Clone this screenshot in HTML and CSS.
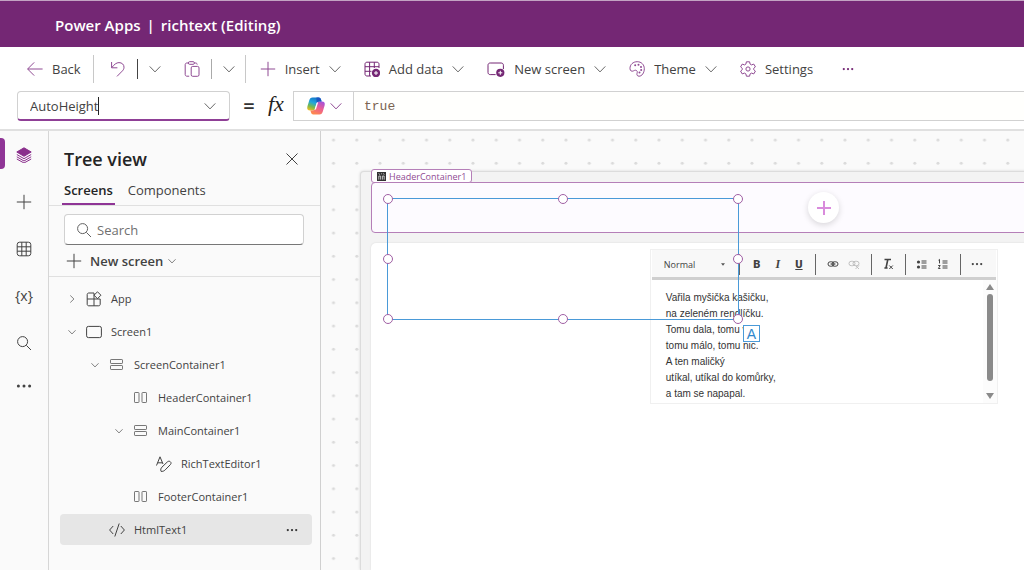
FILE: index.html
```html
<!DOCTYPE html>
<html lang="en">
<head>
    <meta charset="UTF-8">
    <meta name="viewport" content="width=device-width, initial-scale=1.0">
    <title>Power Apps | richtext (Editing)</title>
    <link rel="stylesheet" href="styles.css">
</head>
<body>
    <!-- Shared icons -->
    <svg class="sprite" aria-hidden="true">
        <symbol id="chevron" viewBox="0 0 12 12"><path d="M.7 3.4 6 8.9l5.3-5.5"/></symbol>
        <symbol id="plus" viewBox="0 0 16 16"><path d="M8 .8v14.4M.8 8h14.4"/></symbol>
        <symbol id="search" viewBox="0 0 16 16"><circle cx="6.6" cy="6.6" r="5"/><path d="m10.4 10.4 4.6 4.6"/></symbol>
        <symbol id="dots" viewBox="0 0 16 16"><g fill="currentColor" stroke="none"><circle cx="2.4" cy="8" r="1.5"/><circle cx="8" cy="8" r="1.5"/><circle cx="13.6" cy="8" r="1.5"/></g></symbol>
        <symbol id="rows" viewBox="0 0 16 16"><rect x="1.500" y="2.500" width="12" height="4" rx=".6"/><rect x="1.500" y="8.500" width="12" height="4" rx=".6"/></symbol>
        <symbol id="columns" viewBox="0 0 16 16"><rect x="1.500" y="2.500" width="4.500" height="10" rx=".6"/><rect x="9" y="2.500" width="4.500" height="10" rx=".6"/></symbol>
        <symbol id="grid" viewBox="0 0 16 16"><rect x="1.2" y="1.2" width="13.6" height="13.6" rx="2.4"/><path d="M5.8 1.2v13.6M10.2 1.2v13.6M1.2 5.8h13.6M1.2 10.2h13.6"/></symbol>
    </svg>

    <header class="topbar">
        <button class="waffle" aria-label="App launcher">
            <svg viewBox="0 0 16 16" width="16" height="16" fill="currentColor">
                <circle cx="2" cy="2" r="1.6"/><circle cx="8" cy="2" r="1.6"/><circle cx="14" cy="2" r="1.6"/>
                <circle cx="2" cy="8" r="1.6"/><circle cx="8" cy="8" r="1.6"/><circle cx="14" cy="8" r="1.6"/>
                <circle cx="2" cy="14" r="1.6"/><circle cx="8" cy="14" r="1.6"/><circle cx="14" cy="14" r="1.6"/>
            </svg>
        </button>
        <h1><span>Power Apps</span><span>|</span><span>richtext (Editing)</span></h1>
    </header>

    <nav class="toolbar">
        <button class="tool">
            <svg class="icon accent" viewBox="0 0 16 16"><path d="M15.6 8H.8M7.2 1.4.6 8l6.6 6.6"/></svg>
            Back
        </button>
        <span class="divider"></span>
        <div class="split">
            <button aria-label="Undo"><svg class="icon accent" viewBox="0 0 16 16"><path d="M1.6 1v5.8h5.8M1.8 6.6C4 3.6 6.4 1.6 9 1.6c3 0 5 2 5 4.6 0 1.600-.6 2.700-1.800 3.900L7 15.400"/></svg></button>
            <span class="divider short dark"></span>
            <button aria-label="Undo options"><svg class="chev"><use href="#chevron"/></svg></button>
        </div>
        <div class="split">
            <button aria-label="Paste"><svg class="icon accent" viewBox="0 0 16 16"><path d="M4.500 2H2.800C1.900 2 1.200 2.700 1.200 3.600v10c0 .9.7 1.600 1.600 1.600h2.400M10.500 2h1.200c.9 0 1.500.7 1.500 1.600"/><rect x="4.400" y=".7" width="6" height="2.600" rx="1.200"/><rect x="7.200" y="5.400" width="7.800" height="9.900" rx="1.500"/></svg></button>
            <span class="divider short"></span>
            <button aria-label="Paste options"><svg class="chev"><use href="#chevron"/></svg></button>
        </div>
        <span class="divider"></span>
        <button class="tool insert">
            <svg class="icon accent"><use href="#plus"/></svg>
            Insert
            <svg class="chev"><use href="#chevron"/></svg>
        </button>
        <button class="tool">
            <svg class="icon accent dark" viewBox="0 0 16 16"><path d="M15 7V3.200C15 2 14.200 1.200 13 1.200H3C1.800 1.200 1 2 1 3.200V13c0 1.200.8 2 2 2h4M5.600 1.200V15M10.300 1.200V7M1 5.700h14M1 10.300h6.500"/><circle cx="12" cy="12" r="4.200" fill="currentColor" stroke="none"/><path d="M12 10v4M10 12h4" stroke="#fff"/></svg>
            Add data
            <svg class="chev"><use href="#chevron"/></svg>
        </button>
        <button class="tool">
            <svg class="icon wide accent dark" viewBox="0 0 18 16"><path d="M16.400 8V4.200c0-1.300-.9-2.200-2.200-2.200H3.200C1.900 2 1 2.900 1 4.200v7.200c0 1.300.9 2.200 2.200 2.200H8.600"/><circle cx="13.300" cy="11.800" r="4.100" fill="currentColor" stroke="none"/><path d="M13.300 9.800v4M11.300 11.800h4" stroke="#fff"/></svg>
            New screen
            <svg class="chev"><use href="#chevron"/></svg>
        </button>
        <button class="tool">
            <svg class="icon accent" viewBox="0 0 16 16"><path d="M1 7.700C.8 3.500 4.200.7 8.200.7c4.200 0 7.100 3 7.100 7 0 4.100-2.400 7.500-5.200 7.500-1.700 0-2.500-1.200-2.100-2.700.5-1.600.4-2.300-.4-2.900-.9-.7-1.800-.4-2.900.2C2.600 10.900 1.100 9.800 1 7.700Z"/><g fill="currentColor" stroke="none"><circle cx="6.200" cy="4.300" r="1"/><circle cx="9.500" cy="3.700" r="1"/><circle cx="12" cy="6" r="1"/><circle cx="12.200" cy="9" r="1"/><circle cx="10.500" cy="11.500" r="1"/></g></svg>
            Theme
            <svg class="chev"><use href="#chevron"/></svg>
        </button>
        <button class="tool">
            <svg class="icon accent" viewBox="0 0 16 16"><path d="M6.400.8h3.200l.5 2.300 1.400.8 2.300-.8 1.600 2.800L13.700 7.400v1.200l1.700 1.500-1.600 2.800-2.300-.8-1.400.8-.5 2.300H6.400l-.5-2.300-1.400-.8-2.300.8L.6 10.100l1.700-1.500V7.400L.6 5.900l1.600-2.800 2.300.8 1.400-.8Z" stroke-linejoin="round"/><circle cx="8" cy="8" r="2.100"/></svg>
            Settings
        </button>
        <button class="tool more" aria-label="More commands"><svg class="chev accent dark"><use href="#dots"/></svg></button>
    </nav>

    <div class="formula-bar">
        <div class="property">
            <input type="text" value="AutoHeight" aria-label="Property"><span class="caret"></span>
            <button aria-label="Show properties"><svg class="chev"><use href="#chevron"/></svg></button>
        </div>
        <span class="equals">=</span>
        <span class="fx">fx</span>
        <button class="copilot" aria-label="Copilot">
            <svg viewBox="0 0 20 20" width="20" height="20">
                <defs>
                    <linearGradient id="cool" x1=".6" y1="0" x2=".2" y2="1"><stop offset="0" stop-color="#1475c9"/><stop offset=".4" stop-color="#20a6dd"/><stop offset=".72" stop-color="#79b94b"/><stop offset="1" stop-color="#f1bd20"/></linearGradient>
                    <linearGradient id="warm" x1=".8" y1="0" x2=".3" y2="1"><stop offset="0" stop-color="#a351dc"/><stop offset=".5" stop-color="#ed5f91"/><stop offset="1" stop-color="#ff8a4a"/></linearGradient>
                </defs>
                <path fill="url(#cool)" d="M6.500 1.500h6.200c1.300 0 1.900.8 2.300 2l.6 2h-2.400c-1.500 0-2.200.7-2.600 2l-1.400 4.700c-.4 1.400-1 2.300-2.600 2.300H4.200C1.700 14.500.7 12.900 1.400 10.500L3.200 4.400C3.800 2.500 4.700 1.500 6.500 1.500Z"/>
                <path fill="url(#warm)" d="M13.500 18.500H7.300c-1.300 0-1.900-.8-2.300-2l-.6-2h2.400c1.500 0 2.200-.7 2.600-2l1.400-4.700c.4-1.400 1-2.300 2.600-2.300h2.400c2.500 0 3.500 1.600 2.800 4l-1.800 6.100c-.6 1.900-1.500 2.900-3.300 2.900Z"/>
                <path fill="#1b55c2" d="M10.500 1.500h2.200c1.300 0 1.900.8 2.300 2l.6 2h-2.400c-1.600 0-2.200.7-2.600 2Z"/>
                <path fill="#fff" d="M10.800 6.500h1.300l-2.200 7H8.500Z"/>
            </svg>
            <svg class="chev accent"><use href="#chevron"/></svg>
        </button>
        <input class="formula" type="text" value="true" aria-label="Formula">
    </div>

    <main class="workspace">
        <nav class="rail">
            <button class="active" aria-label="Tree view">
                <svg viewBox="0 0 16 16"><path d="M8 .8 15.200 5 8 9.300.8 5Z" fill="currentColor"/><path d="m.8 7.500 7.200 4.200 7.200-4.200M.8 9.800 8 14l7.200-4.200M.8 12 8 16l7.200-4"/></svg>
            </button>
            <button aria-label="Insert"><svg><use href="#plus"/></svg></button>
            <button aria-label="Data"><svg><use href="#grid"/></svg></button>
            <button aria-label="Variables">{x}</button>
            <button aria-label="Search"><svg><use href="#search"/></svg></button>
            <button aria-label="More"><svg><use href="#dots"/></svg></button>
        </nav>

        <aside class="tree-panel">
            <div class="panel-title">
                <h2>Tree view</h2>
                <button aria-label="Close"><svg viewBox="0 0 12 12" width="12" height="12"><path d="m.5.5 11 11M11.500.5l-11 11"/></svg></button>
            </div>
            <div class="tabs">
                <button class="selected">Screens</button>
                <button>Components</button>
            </div>
            <div class="panel-actions">
                <label class="search">
                    <svg class="icon"><use href="#search"/></svg>
                    <input type="text" placeholder="Search" aria-label="Search">
                </label>
                <button class="new-screen">
                    <svg class="icon"><use href="#plus"/></svg>
                    New screen
                    <svg class="small-chev"><use href="#chevron"/></svg>
                </button>
            </div>
            <ul class="tree">
                <li>
                    <button class="toggle closed" aria-label="Expand"><svg><use href="#chevron"/></svg></button>
                    <span class="node-icon"><svg viewBox="0 0 16 16"><path d="M8 8V2H2.800C1.900 2 1.200 2.600 1.200 3.500v9.800c0 .9.700 1.500 1.600 1.500h9.900c.9 0 1.500-.6 1.500-1.500V8Zm0 0v6.800M1.200 8H8"/><path d="m11.500.8 3.400 3.400-3.400 3.500-3.500-3.500Z"/></svg></span>
                    App
                </li>
                <li>
                    <button class="toggle" aria-label="Collapse"><svg><use href="#chevron"/></svg></button>
                    <span class="node-icon"><svg viewBox="0 0 16 16"><rect x=".6" y="2.400" width="14.800" height="11.200" rx="1.800"/></svg></span>
                    Screen1
                </li>
                <li class="level-1">
                    <button class="toggle" aria-label="Collapse"><svg><use href="#chevron"/></svg></button>
                    <span class="node-icon light"><svg><use href="#rows"/></svg></span>
                    ScreenContainer1
                </li>
                <li class="level-2">
                    <span class="toggle"></span>
                    <span class="node-icon light"><svg><use href="#columns"/></svg></span>
                    HeaderContainer1
                </li>
                <li class="level-2">
                    <button class="toggle" aria-label="Collapse"><svg><use href="#chevron"/></svg></button>
                    <span class="node-icon light"><svg><use href="#rows"/></svg></span>
                    MainContainer1
                </li>
                <li class="level-3">
                    <span class="toggle"></span>
                    <span class="node-icon"><svg viewBox="0 0 16 16"><path d="M.5 9.500 4 .8l3 7.200M1.600 6.800h4.800"/><path d="M5 15.300c-.6-1.500-.2-3 .9-4.100l5.500-5.300c2-1.900 4.900.6 3 2.700l-5.200 5.300c-1.200 1.200-2.600 1.700-4.200 1.400Z"/></svg></span>
                    RichTextEditor1
                </li>
                <li class="level-2">
                    <span class="toggle"></span>
                    <span class="node-icon light"><svg><use href="#columns"/></svg></span>
                    FooterContainer1
                </li>
                <li class="level-1 selected">
                    <span class="toggle"></span>
                    <span class="node-icon"><svg viewBox="0 0 16 16"><path d="M4.200 4 .6 8l3.600 4M11.800 4l3.600 4-3.600 4M10.200 1.500 5.800 14.500"/></svg></span>
                    HtmlText1
                    <button class="row-more" aria-label="More actions"><svg class="chev"><use href="#dots"/></svg></button>
                </li>
            </ul>
        </aside>

        <section class="canvas">
            <svg class="dot-grid" aria-hidden="true">
                <defs><pattern id="dotPattern" width="23.25" height="23.25" patternUnits="userSpaceOnUse"><circle cx="12.500" cy="9" r="1.500" fill="#dadada"/></pattern></defs>
                <rect width="100%" height="100%" fill="url(#dotPattern)"/>
            </svg>
            <div class="artboard">
                <div class="header-container">
                    <button class="add-control" aria-label="Add control"><svg viewBox="0 0 16 16" width="16" height="16"><path d="M8 1v14M1 8h14"/></svg></button>
                </div>
                <div class="main-container">
                    <div class="editor">
                        <div class="editor-tools">
                            <select aria-label="Paragraph style"><option>Normal</option></select>
                            <svg class="drop-arrow" viewBox="0 0 6 4"><path d="M0 0h6L3 4Z"/></svg>
                            <span class="bar"></span>
                            <button class="bold">B</button>
                            <button class="italic">I</button>
                            <button class="underline">U</button>
                            <span class="bar"></span>
                            <button aria-label="Link"><svg viewBox="0 0 12 12"><rect x="1" y="3.800" width="6" height="4.400" rx="2.200"/><rect x="5" y="3.800" width="6" height="4.400" rx="2.200"/><path d="M3.500 6h5"/></svg></button>
                            <button aria-label="Remove link" disabled><svg viewBox="0 0 12 12"><rect x="1" y="3.300" width="6" height="4.400" rx="2.200"/><rect x="5" y="3.300" width="6" height="4.400" rx="2.200"/><path d="m7.500 7.500 3.500 3.500M11 7.500 7.500 11"/></svg></button>
                            <span class="bar"></span>
                            <button class="clear" aria-label="Clear formatting"><svg viewBox="0 0 12 12"><path d="M2.500 1.500h6.500M5.800 1.500 4 10M2.400 10h3.200" stroke-width="1.600"/><path d="m7.300 7.500 3.500 3.500M10.800 7.500 7.300 11"/></svg></button>
                            <span class="bar"></span>
                            <button aria-label="Bulleted list"><svg viewBox="0 0 12 12"><path d="M5.500 3h5M5.500 5h5M5.500 8h5M5.500 10h5"/><circle cx="2.500" cy="4" r="1.600" fill="currentColor" stroke="none"/><circle cx="2.500" cy="9" r="1.600" fill="currentColor" stroke="none"/></svg></button>
                            <button aria-label="Numbered list"><svg viewBox="0 0 12 12"><path d="M5.500 3h5M5.500 5h5M5.500 8h5M5.500 10h5M1.500 2.200l1-.8v4M1.200 7.500h2L1.400 10.500h2"/></svg></button>
                            <span class="bar"></span>
                            <button aria-label="More"><svg viewBox="0 0 16 16"><use href="#dots"/></svg></button>
                        </div>
                        <div class="editor-body">
                            <p>Vařila myšička kašičku,<br>na zeleném rendlíčku.<br>Tomu dala, tomu víc,<br>tomu málo, tomu nic.<br>A ten maličký<br>utíkal, utíkal do komůrky,<br>a tam se napapal.</p>
                            <div class="scrollbar">
                                <svg viewBox="0 0 8 6"><path d="M4 0 8 6H0Z"/></svg>
                                <span class="thumb"></span>
                                <svg viewBox="0 0 8 6"><path d="M0 0h8L4 6Z"/></svg>
                            </div>
                        </div>
                    </div>
                </div>

                <div class="container-tag">
                    <svg viewBox="0 0 10 10" width="9" height="9"><path d="M0 0h10v10H0Z" fill="#333"/><path d="M2 8.500v-4h2v4M6 8.500v-4h2v4M2 1.500l1 1.500M7 1.500l1 1.500M4.500 2h1" stroke="#ddd" stroke-width=".9" fill="none"/></svg>
                    HeaderContainer1
                </div>

                <!-- Selected control outline with its resize handles -->
                <div class="selection">
                    <span class="handle top left"></span>
                    <span class="handle top center"></span>
                    <span class="handle top right"></span>
                    <span class="handle middle left"></span>
                    <span class="handle middle right"></span>
                    <span class="handle bottom left"></span>
                    <span class="handle bottom center"></span>
                    <span class="handle bottom right"></span>
                    <span class="text-badge">A</span>
                </div>
            </div>
        </section>
    </main>
</body>
</html>
```

FILE: styles.css
```css
* {
    box-sizing: border-box;
    margin: 0;
    padding: 0;
}

body {
    font-family: 'Open Sans', 'Noto Sans', sans-serif;
    font-size: 13px;
    color: #424242;
    background-color: #fff;
    height: 100vh;
    display: flex;
    flex-direction: column;
    overflow: hidden;
}

button,
input,
select {
    font: inherit;
    color: inherit;
    background: none;
    border: none;
    outline: none;
}

button {
    display: flex;
    align-items: center;
    justify-content: center;
    cursor: pointer;
    white-space: nowrap;
}

svg {
    fill: none;
    stroke: currentColor;
    flex-shrink: 0;
}

.sprite {
    position: absolute;
    width: 0;
    height: 0;
}

.icon {
    width: 16px;
    height: 16px;
}

.icon.wide {
    width: 18px;
}

.chev {
    width: 12px;
    height: 12px;
    color: #666;
}

.accent {
    color: #8f4a93;
}

.accent.dark {
    color: #742774;
}

/* Top bar */
.topbar {
    height: 47px;
    background-color: #742774;
    border-top: 1px solid #c3a3c3;
    color: #fff;
    display: flex;
    align-items: center;
    flex-shrink: 0;
    padding: 1px 16px 0;
    gap: 23px;
}

.waffle svg {
    stroke: none;
}

.topbar h1 {
    font-size: 15px;
    font-weight: 600;
    display: flex;
    gap: 6px;
}

/* Command bar */
.toolbar {
    height: 43px;
    display: flex;
    align-items: center;
    flex-shrink: 0;
    padding: 1px 27px 0;
    gap: 23px;
}

.tool {
    gap: 9px;
}

.tool:first-child {
    margin-right: -11px;
}

.insert {
    margin-left: -9px;
}

.more {
    margin-left: 6px;
}

.divider {
    width: 1px;
    height: 28px;
    background-color: #c8c8c8;
    flex-shrink: 0;
}

.divider.short {
    height: 20px;
    background-color: #aaa;
}

.divider.short.dark {
    background-color: #444;
}

.split {
    display: flex;
    align-items: center;
    gap: 11px;
}

.split + .divider {
    margin-left: -13px;
}

.divider + .split {
    margin-left: -7px;
}

/* Formula bar */
.formula-bar {
    height: 41px;
    display: flex;
    flex-shrink: 0;
    padding: 1px 0 8px 17px;
    border-bottom: 2px solid #e0e0e0;
}

.property {
    width: 213px;
    display: flex;
    align-items: center;
    flex-shrink: 0;
    border: 1px solid #d1d1d1;
    border-bottom: 2px solid #8f3f96;
    border-radius: 4px;
    padding: 1px 13px 0 12px;
}

.property input {
    field-sizing: content;
}

.property button {
    margin-left: auto;
}

.caret {
    width: 1px;
    height: 18px;
    background-color: #222;
}

.equals {
    width: 38px;
    text-align: center;
    font-size: 20px;
    font-weight: 600;
    line-height: 29px;
    color: #333;
}

.fx {
    width: 25px;
    font-family: 'Liberation Serif', serif;
    font-style: italic;
    font-size: 22px;
    line-height: 26px;
    color: #222;
}

.copilot {
    width: 61px;
    gap: 4px;
    border: 1px solid #d1d1d1;
    flex-shrink: 0;
}

.copilot > svg:first-child {
    stroke: none;
}

.formula {
    flex: 1;
    min-width: 0;
    border: 1px solid #d1d1d1;
    border-width: 1px 0;
    background-color: #fffffd;
    font-family: 'Liberation Mono', monospace;
    color: #7a6352;
    padding: 0 10px;
}

/* Workspace */
.workspace {
    flex: 1;
    min-height: 0;
    display: flex;
}

.rail {
    width: 49px;
    background-color: #fafafa;
    border-right: 1px solid #d6d6d6;
    flex-shrink: 0;
}

.rail button {
    width: 100%;
    height: 47px;
    font-size: 14px;
}

.rail button:last-child {
    height: 39px;
}

.rail svg {
    width: 16px;
    height: 16px;
}

.rail .active {
    position: relative;
    color: #8a2f8c;
}

.rail .active::before {
    content: "";
    position: absolute;
    left: 0;
    top: 7px;
    width: 5px;
    height: 31px;
    background-color: #8f3596;
    border-radius: 0 4px 4px 0;
}

.tree-panel {
    width: 272px;
    background-color: #fafafa;
    border-right: 1px solid #d0d0d0;
    flex-shrink: 0;
}

.panel-title {
    display: flex;
    justify-content: space-between;
    align-items: center;
    height: 44px;
    padding: 12px 22px 0 15px;
}

.panel-title h2 {
    font-size: 18px;
    font-weight: 600;
    color: #242424;
}

.tabs {
    display: flex;
    gap: 11px;
    height: 31px;
    padding-left: 13px;
    border-bottom: 1px solid #e0e0e0;
}

.tabs button {
    padding: 2px 2px 0;
    border-bottom: 2px solid transparent;
}

.tabs .selected {
    font-weight: 600;
    color: #242424;
    border-color: #8f3596;
}

.panel-actions {
    padding: 8px 16px 0 15px;
    border-bottom: 1px solid #e0e0e0;
    height: 71px;
}

.search {
    display: flex;
    align-items: center;
    gap: 5px;
    height: 31px;
    padding: 0 12px 0 11px;
    background-color: #fff;
    border: 1px solid #d1d1d1;
    border-bottom-color: #777;
    border-radius: 4px;
    color: #616161;
}

.search input {
    flex: 1;
    min-width: 0;
}

.search input::placeholder {
    color: #707070;
}

.new-screen {
    height: 31px;
    padding-left: 2px;
    gap: 8px;
    font-weight: 600;
}

.small-chev {
    width: 8px;
    height: 8px;
}

.new-screen .small-chev {
    margin-left: -3px;
}

.tree {
    list-style: none;
    display: flex;
    flex-direction: column;
    gap: 2px;
    padding: 6px 8px 0 11px;
    font-size: 11px;
}

.tree li {
    display: flex;
    align-items: center;
    height: 31px;
    border-radius: 4px;
}

.tree .level-1 {
    padding-left: 23px;
}

.tree .level-2 {
    padding-left: 47px;
}

.tree .level-3 {
    padding-left: 70px;
}

.tree .selected {
    background-color: #e6e6e6;
}

.toggle {
    width: 23px;
}

.toggle svg {
    width: 8px;
    height: 8px;
}

.toggle.closed svg {
    transform: rotate(-90deg);
}

.node-icon {
    display: flex;
    justify-content: center;
    width: 22px;
    margin-right: 6px;
}

.node-icon svg {
    width: 16px;
    height: 16px;
}

.node-icon.light {
    color: #777;
}

.row-more {
    margin-left: auto;
    padding-right: 14px;
}

.row-more .chev {
    color: #333;
}

/* Canvas */
.canvas {
    flex: 1;
    min-width: 0;
    position: relative;
    overflow: hidden;
    background-color: #fafafa;
    padding: 40px 0 0 39px;
    display: flex;
}

.dot-grid {
    position: absolute;
    left: 0;
    top: 0;
    width: 100%;
    height: 100%;
    stroke: none;
}

.artboard {
    position: relative;
    width: 140%;
    flex-shrink: 0;
    background-color: #f3f3f3;
    border: 1px solid #dcdcdc;
    border-bottom: none;
    border-radius: 4px 0 0 0;
    box-shadow: 0 0 3px rgba(0, 0, 0, 0.15);
    padding: 10px 12px 0 10px;
    display: flex;
    flex-direction: column;
    gap: 10px;
}

.header-container {
    height: 51px;
    flex-shrink: 0;
    display: flex;
    justify-content: center;
    align-items: center;
    background-color: #fdfbff;
    border: 1px solid #b57fb8;
    border-radius: 4px;
}

.add-control {
    width: 31px;
    height: 31px;
    border-radius: 50%;
    background-color: #fff;
    color: #d98bdc;
    box-shadow: 0 2px 6px rgba(0, 0, 0, 0.15);
}

.add-control svg {
    stroke-width: 2;
}

.main-container {
    flex: 1;
    background-color: #fff;
    border-radius: 5px 5px 0 0;
    box-shadow: 0 0 2px rgba(0, 0, 0, 0.12);
    padding-top: 6px;
    display: flex;
    justify-content: center;
    align-items: flex-start;
}

.editor {
    width: 348px;
    border: 1px solid #f0f0f0;
}

.editor-tools {
    display: flex;
    align-items: center;
    height: 30px;
    margin: 0 1px;
    padding: 1px 8px 0 12px;
    background-color: #f8f8f8;
    border-bottom: 3px solid #cfcfcf;
}

.editor-tools select {
    appearance: none;
    width: 60px;
    font-size: 9px;
}

.drop-arrow {
    width: 4px;
    height: 3px;
    fill: #555;
    stroke: none;
}

.bar {
    width: 1px;
    height: 21px;
    background-color: #666;
    margin: 0 6px;
}

.drop-arrow + .bar {
    margin-left: 14px;
}

.editor-tools button {
    width: 22px;
    font-family: Roboto, sans-serif;
    font-size: 11px;
    font-weight: 900;
}

.editor-tools .italic {
    font-family: 'Liberation Serif', serif;
    font-style: italic;
    font-weight: 700;
    font-size: 12px;
}

.editor-tools .underline {
    text-decoration: underline;
}

.editor-tools svg:not(.drop-arrow) {
    width: 12px;
    height: 12px;
}

.editor-tools button:disabled {
    color: #c0c0c0;
}

.editor-body {
    display: flex;
    justify-content: space-between;
    height: 123px;
    overflow: hidden;
    background-color: #fff;
    font-family: 'Liberation Sans', Arial, sans-serif;
    font-size: 10px;
    line-height: 16px;
    color: #333;
    padding-left: 15px;
}

.editor-body p {
    padding-top: 10px;
}

.scrollbar {
    width: 14px;
    display: flex;
    flex-direction: column;
    align-items: center;
    gap: 4px;
    padding: 4px 0;
    background-color: #fcfcfc;
}

.scrollbar svg {
    width: 8px;
    height: 6px;
    fill: #8a8a8a;
    stroke: none;
}

.thumb {
    width: 6px;
    height: 87px;
    border-radius: 3px;
    background-color: #8a8a8a;
}

.scrollbar svg:last-child {
    margin-top: auto;
}

.container-tag {
    position: absolute;
    left: 10px;
    top: -3px;
    height: 14px;
    display: flex;
    align-items: center;
    gap: 3px;
    padding: 0 5px;
    border: 1px solid #b57fb8;
    border-radius: 3px;
    background-color: #fff;
    color: #8f4a93;
    font-size: 9px;
}

.container-tag svg {
    stroke: none;
}

.selection {
    position: absolute;
    left: 26px;
    top: 26px;
    width: 352px;
    height: 122px;
    border: 1px solid #4a9ad8;
}

.handle {
    position: absolute;
    width: 10px;
    height: 10px;
    border: 1px solid #a05fa4;
    border-radius: 50%;
    background-color: #fff;
    transform: translate(-50%, -50%);
}

.handle.top {
    top: 0;
}

.handle.middle {
    top: 50%;
}

.handle.bottom {
    top: 100%;
}

.handle.left {
    left: 0;
}

.handle.center {
    left: 50%;
}

.handle.right {
    left: 100%;
}

.text-badge {
    position: absolute;
    left: 355px;
    top: 126px;
    width: 17px;
    height: 17px;
    border: 1px solid #4a9ad8;
    background-color: #fff;
    color: #2f87cc;
    font-family: 'Liberation Sans', Arial, sans-serif;
    font-size: 14px;
    line-height: 16px;
    text-align: center;
}
```
